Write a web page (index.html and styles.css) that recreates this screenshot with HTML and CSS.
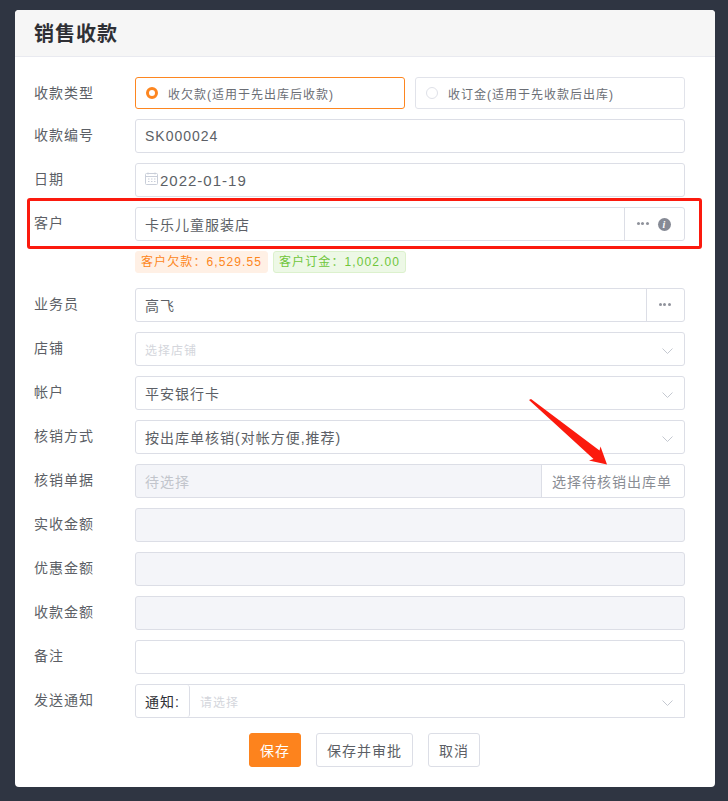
FILE: index.html
```
<!DOCTYPE html>
<html lang="zh-CN">
<head>
<meta charset="utf-8">
<title>销售收款</title>
<link rel="stylesheet" href="styles.css">
</head>
<body>
<main class="card">
  <header class="card-head"><h1>销售收款</h1></header>
  <form class="form">
    <div class="row row-radio">
      <label class="lbl">收款类型</label>
      <div class="radios">
        <div class="radio on"><i class="dot"></i><span>收欠款(适用于先出库后收款)</span></div>
        <div class="radio"><i class="dot"></i><span>收订金(适用于先收款后出库)</span></div>
      </div>
    </div>
    <div class="row">
      <label class="lbl">收款编号</label>
      <div class="ctl"><span class="val">SK000024</span></div>
    </div>
    <div class="row">
      <label class="lbl">日期</label>
      <div class="ctl date">
        <svg class="cal" width="13" height="13" viewBox="0 0 13 13" fill="none" stroke="#c9ced9"><rect x=".5" y="1.5" width="12" height="11" rx="1"/><path d="M.5 4.500h12M3 .5v2M10 .5v2M3 7h1.500M6 7h1.500M9 7h1.500M3 9.500h1.500M6 9.500h1.500M9 9.500h1.500"/></svg>
        <span class="val date-val">2022-01-19</span>
      </div>
    </div>
    <div class="row">
      <label class="lbl">客户</label>
      <div class="ctl split">
        <span class="val grow">卡乐儿童服装店</span>
        <div class="addon wide">
          <span class="dots"><b></b><b></b><b></b></span>
          <span class="info">i</span>
        </div>
      </div>
    </div>
    <div class="tags">
      <span class="tag warn">客户欠款：6,529.55</span>
      <span class="tag ok">客户订金：1,002.00</span>
    </div>
    <div class="row">
      <label class="lbl">业务员</label>
      <div class="ctl split">
        <span class="val grow">高飞</span>
        <div class="addon"><span class="dots"><b></b><b></b><b></b></span></div>
      </div>
    </div>
    <div class="row">
      <label class="lbl">店铺</label>
      <div class="ctl select"><span class="val ph">选择店铺</span><svg class="chev" width="11" height="6" viewBox="0 0 11 6" fill="none" stroke="#c4c8d0"><path d="M.5.500 5.500 5.500 10.500.500"/></svg></div>
    </div>
    <div class="row">
      <label class="lbl">帐户</label>
      <div class="ctl select"><span class="val">平安银行卡</span><svg class="chev" width="11" height="6" viewBox="0 0 11 6" fill="none" stroke="#c4c8d0"><path d="M.5.500 5.500 5.500 10.500.500"/></svg></div>
    </div>
    <div class="row">
      <label class="lbl">核销方式</label>
      <div class="ctl select"><span class="val">按出库单核销(对帐方便,推荐)</span><svg class="chev" width="11" height="6" viewBox="0 0 11 6" fill="none" stroke="#c4c8d0"><path d="M.5.500 5.500 5.500 10.500.500"/></svg></div>
    </div>
    <div class="row">
      <label class="lbl">核销单据</label>
      <div class="ctl split disabled">
        <span class="val grow ph2">待选择</span>
        <div class="addon pick">选择待核销出库单</div>
      </div>
    </div>
    <div class="row">
      <label class="lbl">实收金额</label>
      <div class="ctl disabled"></div>
    </div>
    <div class="row">
      <label class="lbl">优惠金额</label>
      <div class="ctl disabled"></div>
    </div>
    <div class="row">
      <label class="lbl">收款金额</label>
      <div class="ctl disabled"></div>
    </div>
    <div class="row">
      <label class="lbl">备注</label>
      <div class="ctl"></div>
    </div>
    <div class="row">
      <label class="lbl">发送通知</label>
      <div class="ctl notify">
        <span class="prefix">通知:</span>
        <span class="val ph grow">请选择</span>
        <svg class="chev" width="11" height="6" viewBox="0 0 11 6" fill="none" stroke="#c4c8d0"><path d="M.5.500 5.500 5.500 10.500.500"/></svg>
      </div>
    </div>
    <div class="actions">
      <button type="button" class="btn primary">保存</button>
      <button type="button" class="btn">保存并审批</button>
      <button type="button" class="btn">取消</button>
    </div>
  </form>
  <div class="highlight"></div>
  <svg class="arrow" width="80" height="67" viewBox="0 0 80 67"><path fill="#fb1a0e" d="M0 1 2 0 70.500 51.500 71.500 47.500 78 65.500 60 61.500 64.500 60Z"/></svg>
</main>
</body>
</html>
```
FILE: styles.css
```
* { box-sizing: border-box; }
html, body { height: 100%; }
body {
  margin: 0;
  padding: 10px 13px 14px 15px;
  background: #2f3542;
  font-family: "Liberation Sans", "Noto Sans CJK SC", sans-serif;
  font-size: 14px;
  letter-spacing: 1px;
  color: #5c5f66;
}
.card {
  position: relative;
  width: 700px;
  height: 777px;
  background: #fff;
  border-radius: 4px;
  overflow: hidden;
}
.card-head {
  height: 47px;
  background: #f6f6f6;
  border-bottom: 1px solid #e9eaf0;
  padding: 2px 0 0 19px;
  display: flex;
  align-items: center;
}
.card-head h1 {
  margin: 0;
  font-size: 20px;
  line-height: 44px;
  font-weight: 700;
  color: #2f3035;
}
.form { padding: 20px 30px 0 19px; }
.row {
  display: flex;
  margin-bottom: 10px;
  height: 34px;
}
.row-radio { height: 32px; }
.lbl {
  flex: 0 0 101px;
  line-height: 32px;
  color: #5c5f66;
}
.radios { flex: 1; display: flex; gap: 10px; }
.radio {
  flex: 1;
  display: flex;
  align-items: center;
  padding-left: 10px;
  border: 1px solid #e1e3ea;
  border-radius: 3px;
  font-size: 12px;
  color: #6b6e75;
}
.radio .dot {
  width: 12px;
  height: 12px;
  border-radius: 50%;
  border: 1px solid #dfe1e8;
  margin-right: 10px;
}
.radio.on { border-color: #fd8620; }
.radio.on .dot { border: 3.500px solid #fd8620; }
.ctl {
  flex: 1;
  display: flex;
  align-items: center;
  border: 1px solid #dcdee6;
  border-radius: 3px;
  padding-left: 9px;
  min-width: 0;
}
.val { color: #5c5f66; }
.date-val { font-size: 15px; }
.grow { flex: 1; }
.date { gap: 2px; }
.cal { margin-bottom: 4px; }
.split { padding-right: 0; }
.addon {
  align-self: stretch;
  flex: 0 0 38px;
  display: flex;
  align-items: center;
  justify-content: center;
  gap: 9px;
  padding-right: 2px;
  border-left: 1px solid #dcdee6;
}
.addon.wide { flex-basis: 60px; }
.dots { display: inline-flex; gap: 1.500px; margin-top: -1px; }
.dots b { width: 3px; height: 3px; border-radius: 50%; background: #8f929b; }
.info {
  width: 13px;
  height: 13px;
  border-radius: 50%;
  background: #868a95;
  color: #fff;
  font: italic 700 10px/13px "Liberation Serif", serif;
  letter-spacing: 0;
  text-align: center;
}
.tags {
  display: flex;
  gap: 5px;
  margin: 1px 0 15px 101px;
}
.tag {
  height: 22px;
  line-height: 20px;
  padding: 0 5px;
  border: 1px solid;
  border-radius: 3px;
  font-size: 12px;
  letter-spacing: 1.1px;
}
.tag.warn { background: #fff0e5; border-color: #fff0e5; color: #fd8620; }
.tag.ok { background: #edf8e6; border-color: #dcf1cd; color: #6fc63a; }
.select { padding-right: 11px; justify-content: space-between; }
.ph { color: #d4d6dc; font-size: 12px; }
.ph2 { color: #c2c5cc; }
.chev { margin-top: 3px; flex: none; }
.disabled { background: #f4f5f9; }
.pick {
  flex-basis: 143px;
  background: #fff;
  color: #8a8d94;
  border-radius: 0 3px 3px 0;
}
.notify { padding-left: 0; padding-right: 11px; border-radius: 3px 0 0 3px; }
.prefix {
  align-self: stretch;
  flex: 0 0 54px;
  display: flex;
  align-items: center;
  padding-left: 9px;
  margin-right: 10px;
  border-right: 1px solid #dcdee6;
  border-radius: 3px;
  color: #2f3035;
  white-space: nowrap;
}
.actions {
  display: flex;
  justify-content: center;
  gap: 15px;
  margin-top: 15px;
  padding-left: 10px;
}
.btn {
  height: 34px;
  padding: 0 10px;
  background: #fff;
  border: 1px solid #dcdee6;
  border-radius: 3px;
  font: inherit;
  letter-spacing: 1px;
  color: #5c5f66;
}
.btn.primary { background: #fd831d; border-color: #fd831d; color: #fff; }
.highlight {
  position: absolute;
  left: 12px;
  top: 188px;
  width: 675px;
  height: 51px;
  border: 3px solid #fb1a0e;
  border-radius: 3px;
}
.arrow { position: absolute; left: 514px; top: 389px; }
```
